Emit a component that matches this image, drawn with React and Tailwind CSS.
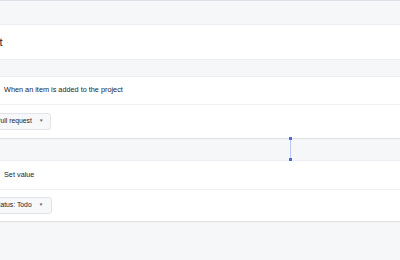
export default function App() {
  return (
    <div className="w-[400px] h-[260px] overflow-hidden bg-[#f6f7f9] border-t border-[#dde1e6] font-['Liberation_Sans',sans-serif] text-[#1f2328]">
      <div className="h-[23px]" />
      <div className="h-[36px] bg-white border-y border-[#eceef1] flex items-center">
        <span className="text-[11px] -ml-[0.5px]">t</span>
      </div>
      <div className="h-[16px]" />
      <div className="bg-white border-t border-[#eceef1] shadow-[0_1px_1px_rgba(31,35,40,0.1)]">
        <div className="h-[28px] flex items-center pl-[4px] border-b border-[#eef0f2]">
          <span className="text-[7.3px]">When an item is added to the project</span>
        </div>
        <div className="h-[33px] flex items-center">
          <div className="h-[17px] -ml-[13px] pl-[8px] pr-[7px] flex items-center gap-[7px] rounded-[3px] border border-[#e1e4e8] bg-[#f6f8fa] text-[6.8px]">
            <span>Pull request</span>
            <span className="text-[4.5px] text-[#59636e]">▼</span>
          </div>
        </div>
      </div>
      <div className="h-[22px] flex">
        <div className="ml-[289px] flex flex-col items-center">
          <div className="w-[3px] h-[3px] bg-[#4a6ee0] -mt-[1px]" />
          <div className="flex-1 w-[1px] bg-[#b9c9f3]" />
          <div className="w-[3px] h-[3px] bg-[#4a6ee0] -mb-[1px]" />
        </div>
      </div>
      <div className="bg-white border-t border-[#eceef1] shadow-[0_1px_1px_rgba(31,35,40,0.1)]">
        <div className="h-[29px] flex items-center pl-[4px] border-b border-[#eef0f2]">
          <span className="text-[7.3px]">Set value</span>
        </div>
        <div className="h-[31px] flex items-center">
          <div className="h-[17px] -ml-[15px] pl-[8px] pr-[8px] flex items-center gap-[7px] rounded-[3px] border border-[#e1e4e8] bg-[#f6f8fa] text-[6.8px]">
            <span>Status: Todo</span>
            <span className="text-[4.5px] text-[#59636e]">▼</span>
          </div>
        </div>
      </div>
    </div>
  );
}
